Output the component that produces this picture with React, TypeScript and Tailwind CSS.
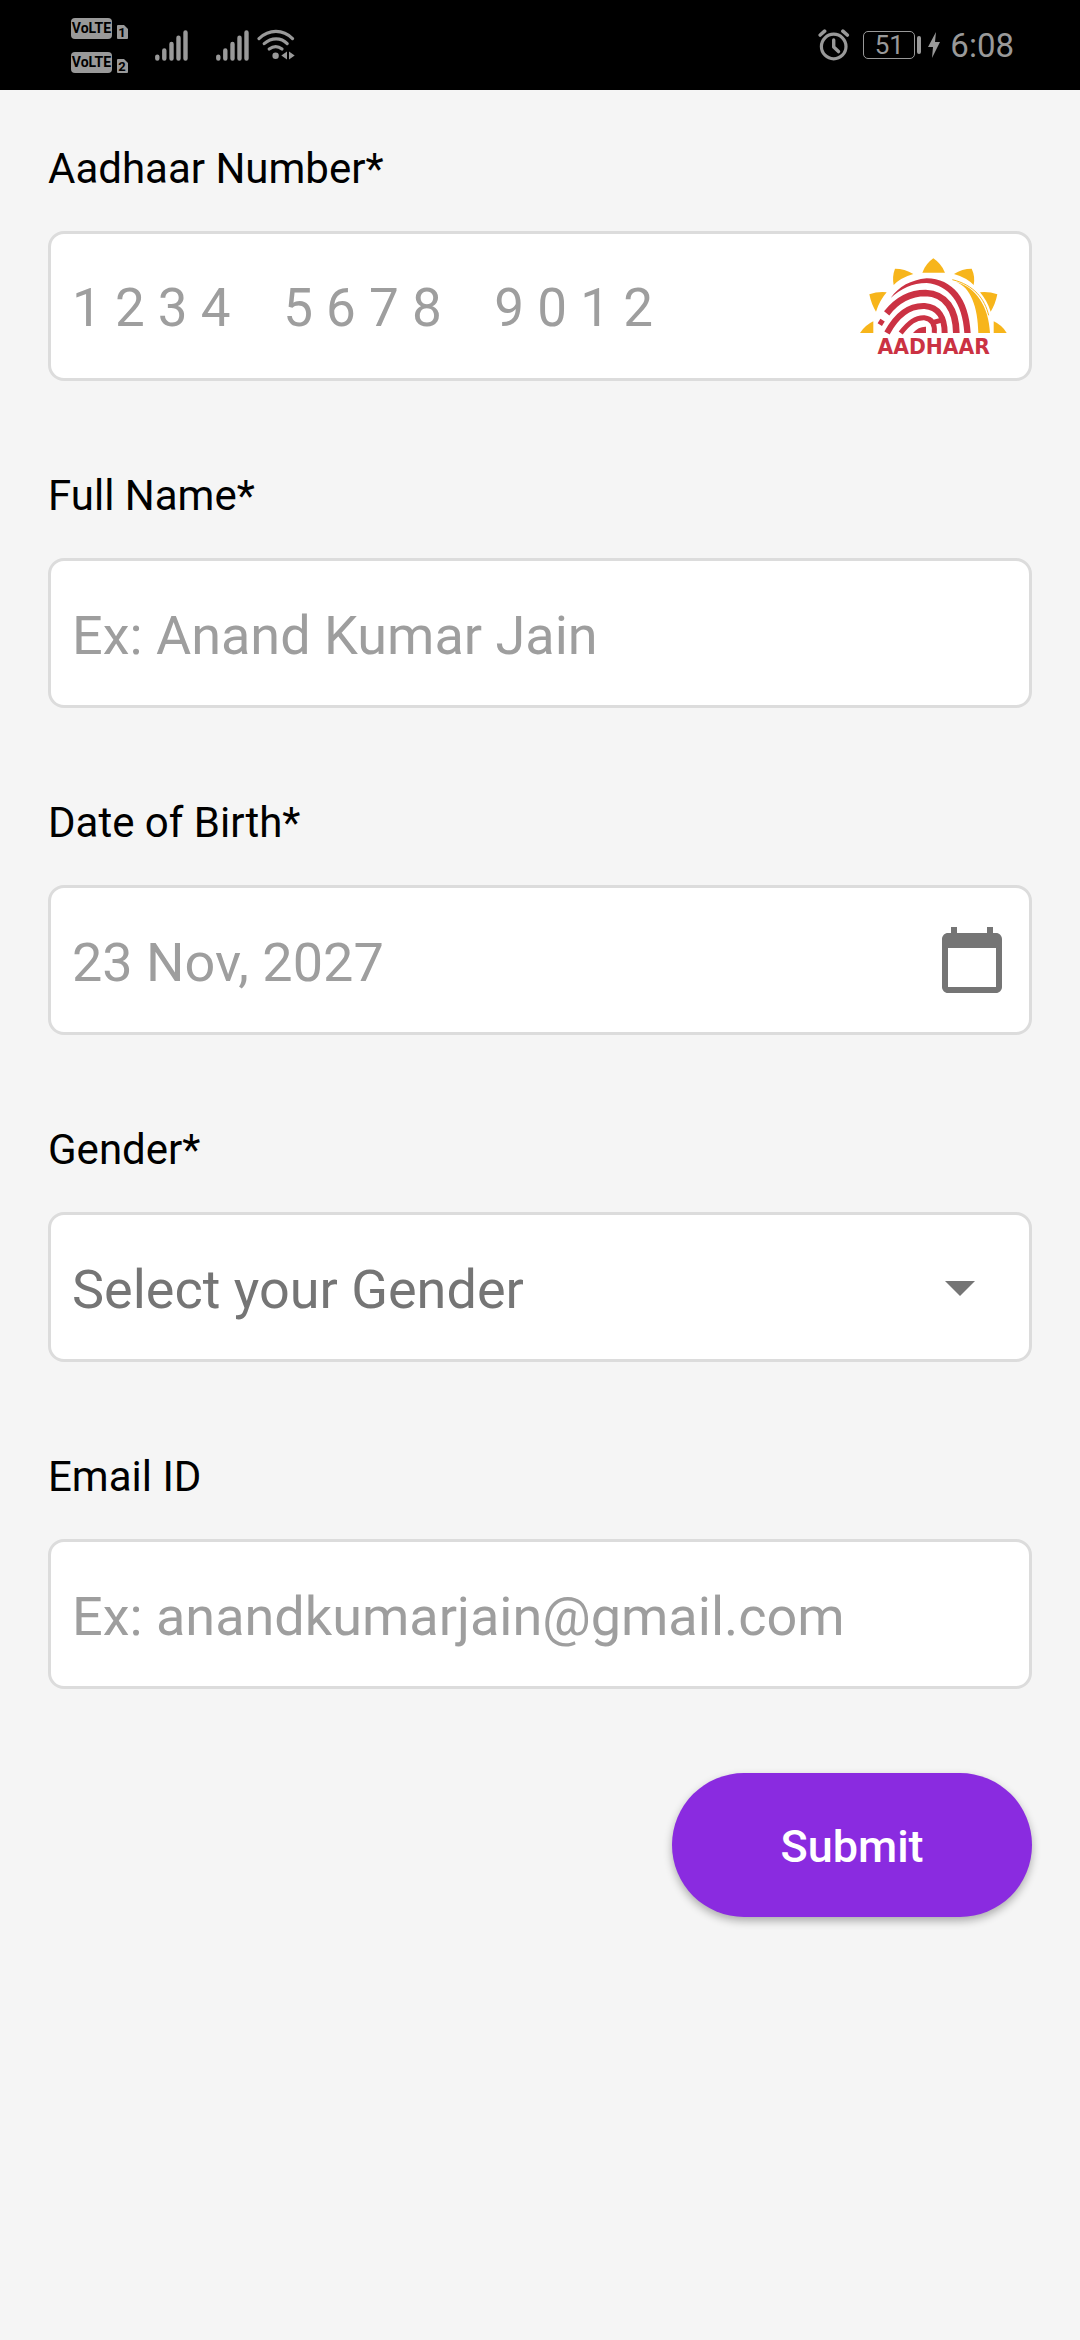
import { useState } from "react";
import type { ReactNode } from "react";

function VolteRow({ sim }: { sim: number }) {
  return (
    <div className="flex items-end gap-[5px]">
      <span className="flex h-[21px] w-[41px] items-center justify-center rounded-[4px] bg-[#999999] text-[14px] leading-none font-bold text-black">
        VoLTE
      </span>
      <svg width="11" height="14" viewBox="0 0 11 14">
        <path d="M1 0H7L11 4V13Q11 14 10 14H1Q0 14 0 13V1Q0 0 1 0Z" fill="#999999" />
        <text x="5" y="12" fontSize="13" fontWeight="700" textAnchor="middle" fill="#000">
          {sim}
        </text>
      </svg>
    </div>
  );
}

function SignalBars() {
  return (
    <svg width="33" height="31" viewBox="0 0 33 31" stroke="#999999" strokeWidth="4.4" strokeLinecap="round">
      <path d="M2.3 26.6V28.6M9.3 20.4V28.6M16.5 14V28.6M23.5 7.8V28.6M30.5 2.4V28.6" />
    </svg>
  );
}

function WifiIcon() {
  return (
    <svg width="38" height="32" viewBox="0 0 38 32" fill="none" stroke="#999999" strokeWidth="3.2" strokeLinecap="round">
      <path d="M2 9.6C12 0 26 0 35.500 9.600" />
      <path d="M7.200 14.600C14.500 8.200 24 8.200 30.200 14.600" />
      <path d="M12.200 20C16.500 16.800 21 16.800 25 20" />
      <circle cx="18.600" cy="26.800" r="3.200" fill="#999999" stroke="none" />
      <path d="M30 22.500V30.500L24.300 26.500ZM32 22.500V30.500L37.700 26.500Z" fill="#999999" stroke="none" />
    </svg>
  );
}

function AlarmIcon() {
  return (
    <svg width="32" height="32" viewBox="0 0 32 32" fill="none" stroke="#999999" strokeLinecap="round">
      <circle cx="15.700" cy="17.500" r="12.300" strokeWidth="3.200" />
      <path d="M15.700 11V18L20.500 22.600" strokeWidth="3.400" strokeLinejoin="round" />
      <path d="M2.200 6L6.600 2.200M29.300 6L24.900 2.200" strokeWidth="3.600" />
    </svg>
  );
}

function StatusBar() {
  return (
    <header className="flex h-[90px] items-center justify-between bg-black pr-[66px] pl-[71px] text-[#999999]">
      <div className="flex items-center">
        <div className="flex flex-col gap-[13px]">
          <VolteRow sim={1} />
          <VolteRow sim={2} />
        </div>
        <div className="ml-[27px] flex items-center">
          <SignalBars />
          <div className="ml-[28px] flex items-center gap-[8px]">
            <SignalBars />
            <WifiIcon />
          </div>
        </div>
      </div>
      <div className="flex items-center">
        <AlarmIcon />
        <div className="ml-[13px] flex items-center gap-[2px]">
          <span className="flex h-[28px] w-[52px] items-center justify-center rounded-[5px] border border-[#999999] text-[26px] leading-none">
            51
          </span>
          <span className="h-[18px] w-[4px] rounded-[2px] bg-[#999999]" />
        </div>
        <svg className="ml-[7px]" width="12" height="26" viewBox="0 0 12 26">
          <path d="M8 0L0 15H5L4 26L12 10H7Z" fill="#999999" />
        </svg>
        <time className="ml-[10px] text-[33px] leading-none">6:08</time>
      </div>
    </header>
  );
}

function AadhaarLogo() {
  return (
    <svg className="h-[110px] w-[150px] shrink-0" viewBox="52 92 450 330" role="img" aria-label="Aadhaar">
      <g fill="#f7b51b">
        <path d="M245 157Q255 130 278 114Q302 130 313 157Z" />
        <path d="M163 145Q192 145 218 161Q180 172 159 194Q154 168 163 145Z" />
        <path d="M393 145Q364 145 340 161Q378 172 399 194Q404 168 393 145Z" />
        <path d="M86 222Q112 213 138 216Q117 240 106 274Q92 252 86 222Z" />
        <path d="M470 222Q444 213 418 216Q439 240 450 274Q464 252 470 222Z" />
        <path d="M58 338Q74 314 98 303V338Z" />
        <path d="M498 338Q484 314 459 303V338Z" />
        <path d="M345 184C390 200 412 260 413 338H448C445 260 407 200 345 184Z" />
      </g>
      <path d="M335 178C400 194 432 235 444 285" fill="none" stroke="#f7b51b" strokeWidth="3" />
      <g fill="none" stroke="#cb3243">
        <path d="M150 233C175 198 210 179 258 174C335 175 385 235 390 338H371C366 248 325 194 258 188C215 188 180 205 150 233Z" fill="#cb3243" stroke="none" />
        <path d="M115 302L128 310" strokeWidth="16" />
        <path d="M138 279C170 238 210 218 255 218C315 220 346 268 347 338" strokeWidth="20" />
        <path d="M139 338C165 290 203 255 252 257C294 260 312 292 312 338" strokeWidth="18" />
        <path d="M180 338C205 306 225 291 251 292C276 295 283 314 281 338M272 308L300 300" strokeWidth="15" />
        <path d="M217 338Q234 318 256 319V338Z" fill="#cb3243" stroke="none" />
      </g>
      <text x="279" y="402" textAnchor="middle" fontSize="61" fontWeight="700" fill="#cb3243" fontFamily="'DejaVu Sans', sans-serif">
        AADHAAR
      </text>
    </svg>
  );
}

function CalendarIcon() {
  return (
    <svg className="size-[72px]" viewBox="0 0 24 24" fill="#757575" aria-hidden="true">
      <path d="M20 3h-1V1h-2v2H7V1H5v2H4c-1.100 0-2 .9-2 2v16c0 1.100.9 2 2 2h16c1.100 0 2-.9 2-2V5c0-1.100-.9-2-2-2zm0 18H4V8h16v13z" />
    </svg>
  );
}

function Field({ id, label, children }: { id: string; label: string; children: ReactNode }) {
  return (
    <div className="flex flex-col gap-[38px]">
      <label htmlFor={id} className="text-[42px] leading-[48px] text-black">
        {label}
      </label>
      <div className="relative flex h-[150px] items-center rounded-[16px] border-3 border-[#dcdcdc] bg-white">
        {children}
      </div>
    </div>
  );
}

const controlClass =
  "h-full min-w-0 flex-1 rounded-[13px] bg-transparent px-[21px] pt-[4px] text-black outline-none placeholder:text-[#9e9e9e]";

export default function App() {
  const [gender, setGender] = useState("");

  return (
    <div className="min-h-screen bg-[#f5f5f5] font-['Roboto',sans-serif]">
      <StatusBar />
      <form className="flex flex-col px-[48px] pt-[55px]" onSubmit={(e) => e.preventDefault()}>
        <div className="flex flex-col gap-[91px]">
          <Field id="aadhaar" label="Aadhaar Number*">
            <input
              id="aadhaar"
              inputMode="numeric"
              placeholder="1 2 3 4    5 6 7 8    9 0 1 2"
              className={`${controlClass} text-[53px]`}
            />
            <div className="mr-[21px] flex">
              <AadhaarLogo />
            </div>
          </Field>
          <Field id="name" label="Full Name*">
            <input id="name" type="text" placeholder="Ex: Anand Kumar Jain" className={`${controlClass} text-[54px]`} />
          </Field>
          <Field id="dob" label="Date of Birth*">
            <input id="dob" type="text" placeholder="23 Nov, 2027" className={`${controlClass} text-[54px]`} />
            <button type="button" aria-label="Choose date" className="mr-[21px]">
              <CalendarIcon />
            </button>
          </Field>
          <Field id="gender" label="Gender*">
            <select
              id="gender"
              value={gender}
              onChange={(e) => setGender(e.target.value)}
              className="h-full w-full appearance-none rounded-[13px] bg-transparent px-[21px] pt-[4px] text-[54px] text-[#757575] outline-none"
            >
              <option value="">Select your Gender</option>
              <option value="female">Female</option>
              <option value="male">Male</option>
              <option value="other">Other</option>
            </select>
            <svg className="pointer-events-none absolute right-[33px] size-[72px]" viewBox="0 0 24 24" fill="#757575" aria-hidden="true">
              <path d="M7 10l5 5 5-5z" />
            </svg>
          </Field>
          <Field id="email" label="Email ID">
            <input id="email" type="email" placeholder="Ex: anandkumarjain@gmail.com" className={`${controlClass} text-[54px]`} />
          </Field>
        </div>
        <button
          type="submit"
          className="mt-[84px] h-[144px] w-[360px] self-end rounded-full bg-[#8a2be0] pt-[4px] text-[45px] font-medium text-white shadow-[0_4px_9px_rgba(0,0,0,0.3)]"
        >
          Submit
        </button>
      </form>
    </div>
  );
}
